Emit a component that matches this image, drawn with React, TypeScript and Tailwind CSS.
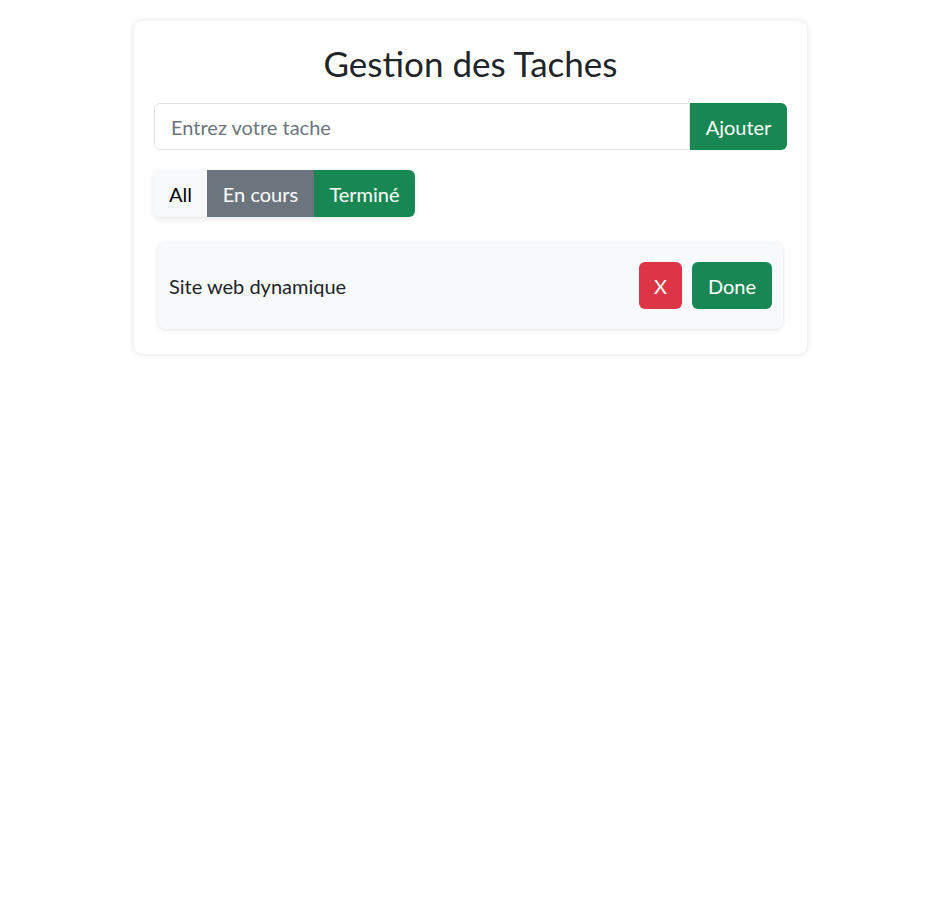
import React from "react";

export default function App() {
  return (
    <div className="min-h-[905px] bg-white text-[#212529]" style={{ fontFamily: '"Segoe UI", Lato, "Noto Sans", sans-serif' }}>
      <div className="pt-[21px]">
        <div className="mx-auto w-[673px] rounded-lg bg-white px-5 pt-[21px] pb-[25px] shadow-[0_0_6px_rgba(0,0,0,0.12)]">
          <h2 className="text-center text-[35px] leading-[42px] font-normal">Gestion des Taches</h2>
          <div className="mt-[19px] flex">
            <input
              className="h-[47px] flex-1 rounded-l-md border border-[#dee2e6] px-4 text-[20px] outline-none placeholder:text-[#6c757d]"
              placeholder="Entrez votre tache"
            />
            <button className="h-[47px] w-[97px] rounded-r-md bg-[#198754] text-[20px] text-white">Ajouter</button>
          </div>
          <div className="mt-5 flex">
            <div className="flex rounded-md shadow-[0_2px_6px_rgba(0,0,0,0.1)]">
              <button className="h-[47px] w-[53px] rounded-l-md bg-[#f8f9fa] text-[20px] text-black">All</button>
              <button className="h-[47px] w-[107px] bg-[#6c757d] text-[20px] text-white">En cours</button>
              <button className="h-[47px] w-[101px] rounded-r-md bg-[#198754] text-[20px] text-white">Terminé</button>
            </div>
          </div>
          <div className="mx-1 mt-[25px] flex h-[87px] items-center justify-between rounded-lg bg-[#f8f9fa] pl-[11px] pr-[11px] shadow-[0_1px_4px_rgba(0,0,0,0.12)]">
            <span className="text-[20px]">Site web dynamique</span>
            <div className="flex gap-[10px]">
              <button className="h-[47px] w-[43px] rounded-md bg-[#dc3545] text-[20px] text-white">X</button>
              <button className="h-[47px] w-[80px] rounded-md bg-[#198754] text-[20px] text-white">Done</button>
            </div>
          </div>
        </div>
      </div>
    </div>
  );
}
